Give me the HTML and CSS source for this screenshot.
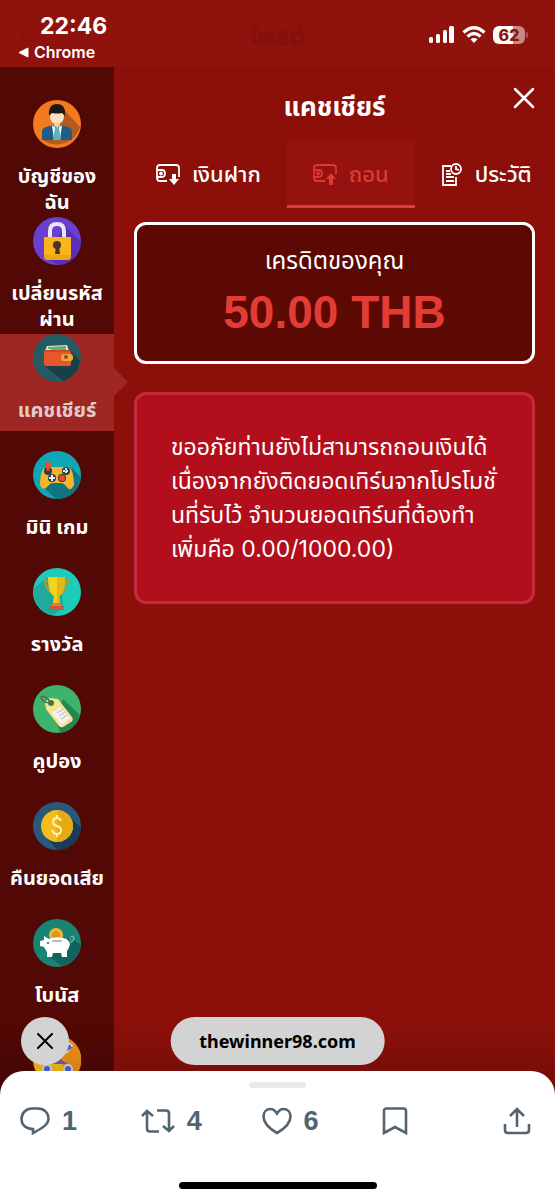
FILE: index.html
```
<!DOCTYPE html>
<html lang="th">
  <head>
    <meta charset="utf-8">
    <meta name="viewport" content="width=device-width, initial-scale=1">
    <title>แคชเชียร์</title>
    <link rel="stylesheet" href="styles.css">
  </head>
  <body>
    <header class="status-bar">
      <div class="status-left">
        <time class="clock">22:46</time>
        <a class="back-app" href="#">
          <svg width="11" height="11" viewBox="0 0 11 11"><path d="M1 5.500L10 1V10Z" fill="#fff" stroke="#fff" stroke-linejoin="round"/></svg>
          Chrome
        </a>
      </div>
      <svg class="ghost-arrow" width="20" height="20" viewBox="0 0 20 20" fill="none" stroke="currentColor" stroke-width="2"><path d="M19 10H2M9 3L2 10l7 7"/></svg>
      <span class="ghost-title">โพสต์</span>
      <div class="status-right">
        <svg width="26" height="18" viewBox="0 0 26 18" fill="#fff">
          <rect x="0" y="11" width="4" height="6" rx="1.500"/>
          <rect x="7" y="8" width="4" height="9" rx="1.500"/>
          <rect x="14" y="4" width="4" height="13" rx="1.500"/>
          <rect x="20" y="0" width="5" height="17" rx="1.500"/>
        </svg>
        <svg width="24" height="18" viewBox="0 0 24 18" fill="none" stroke="#fff" stroke-width="3.200">
          <path d="M1.500 6.500Q12-3 22.500 6.500M5.500 10.500Q12 4.500 18.500 10.500"/>
          <path d="M12 17l-3.500-3.700Q12 10.500 15.500 13.300Z" fill="#fff" stroke="none"/>
        </svg>
        <div class="battery"><span class="battery-level">62</span></div>
      </div>
    </header>

    <div class="browser">
      <nav class="sidebar">
        <a class="side-item" href="#">
          <svg class="side-icon" viewBox="0 0 48 48">
            <circle cx="24" cy="24" r="24" fill="#f47a20"/>
            <path d="M31 10L47 27A24 24 0 0 1 10 40L20 25Z" fill="#b55a1c"/>
            <path d="M9 40V32q0-4 4-5l7-2h8l7 2q4 1 4 5v8Z" fill="#1f5c86"/>
            <path d="M19 25l5 4 5-4-2 15h-6Z" fill="#fff"/>
            <path d="M22 28h4l2 12h-8Z" fill="#58b5bd"/>
            <path d="M21 20h6v6l-3 2-3-2Z" fill="#edc8a5"/>
            <path d="M17 10h14v7q-1 7-7 7t-7-7Z" fill="#fbdfc2"/>
            <path d="M16 16q-1-12 8-12t8 12l-3-3q-5 1-10 0Z" fill="#1d1716"/>
          </svg>
          <span class="side-label">บัญชีของ<br>ฉัน</span>
        </a>
        <a class="side-item" href="#">
          <svg class="side-icon" viewBox="0 0 48 48">
            <circle cx="24" cy="24" r="24" fill="#6b3fd0"/>
            <path d="M32 9L48 25A24 24 0 0 1 26 48L12 41Z" fill="#5630b8"/>
            <path d="M17 21v-7q0-7 7-7t7 7v7" fill="none" stroke="#e8e6f4" stroke-width="4"/>
            <path d="M11 20h27v19q0 4-4 4H15q-4 0-4-4Z" fill="#fbb51b"/>
            <path d="M11 38h27v1q0 4-4 4H15q-4 0-4-4Z" fill="#f0a315"/>
            <circle cx="24" cy="28" r="4" fill="#4a3523"/>
            <path d="M23 29h3l1 8h-5Z" fill="#4a3523"/>
          </svg>
          <span class="side-label">เปลี่ยนรหัส<br>ผ่าน</span>
        </a>
        <a class="side-item active" href="#" aria-current="page">
          <svg class="side-icon" viewBox="0 0 48 48">
            <circle cx="24" cy="24" r="24" fill="#245b63"/>
            <path d="M37 15L47 27A24 24 0 0 1 30 47L12 32Z" fill="#193f49"/>
            <path d="M12 17l2-5 20-1 2 6Z" fill="#d9eadb"/>
            <path d="M15 14l18-1M18 16l15-1" stroke="#64ac74" stroke-width="2"/>
            <rect x="11" y="16" width="27" height="16" rx="2" fill="#e9552c"/>
            <path d="M12 17h25" stroke="#b43e21" stroke-width="1"/>
            <rect x="28" y="20" width="12" height="7" rx="3" fill="#edaa36"/>
            <circle cx="33" cy="23" r="2" fill="#82522d"/>
          </svg>
          <span class="side-label">แคชเชียร์</span>
        </a>
        <a class="side-item" href="#">
          <svg class="side-icon" viewBox="0 0 48 48">
            <circle cx="24" cy="24" r="24" fill="#0fa6b5"/>
            <path d="M39 17L48 27A24 24 0 0 1 23 48L10 36Z" fill="#107582"/>
            <path d="M10 18q3-3 8-2h12q5-1 8 2 3 6 3 16-4 8-8 1-2-3-5-3h-8q-3 0-5 3-5 6-8-1 0-10 3-16Z" fill="#f6b52c"/>
            <circle cx="15" cy="20" r="4" fill="#263e51"/><path d="M15 20v-6" stroke="#ef4c21" stroke-width="3"/>
            <circle cx="15" cy="14" r="3" fill="#ef4c21"/>
            <circle cx="33" cy="20" r="4" fill="#263e51"/><path d="M33 17v6M30 20h6" stroke="#d9edf0" stroke-width="2" stroke-dasharray="2 1"/>
            <circle cx="19" cy="27" r="4" fill="#263e51"/><path d="M19 24v6M16 27h6" stroke="#eee" stroke-width="2"/>
            <circle cx="29" cy="27" r="4" fill="#263e51"/><circle cx="29" cy="27" r="3" fill="#ef4c21"/>
          </svg>
          <span class="side-label">มินิ เกม</span>
        </a>
        <a class="side-item" href="#">
          <svg class="side-icon" viewBox="0 0 48 48">
            <circle cx="24" cy="24" r="24" fill="#1ccbb8"/>
            <path d="M15 9L1 20A24 24 0 0 0 20 47L30 40 28 12Z" fill="#20aa9e"/>
            <path d="M17 13h-5q1 11 10 13M30 13h5q-1 11-10 13" fill="none" stroke="#b19b2a" stroke-width="2"/>
            <path d="M15 9h17q0 17-6 19l1 8h-7l1-8q-6-2-6-19Z" fill="#f3d31c"/>
            <path d="M24 9h8q0 17-6 19l1 8h-3Z" fill="#e5b816"/>
            <path d="M20 35h7l3 4H17Z" fill="#e77b34"/><rect x="16" y="38" width="15" height="4" fill="#c85a3c"/>
          </svg>
          <span class="side-label">รางวัล</span>
        </a>
        <a class="side-item" href="#">
          <svg class="side-icon" viewBox="0 0 48 48">
            <circle cx="24" cy="24" r="24" fill="#3db46c"/>
            <path d="M30 14L47 30A24 24 0 0 1 28 48L21 34Z" fill="#278550"/>
            <path d="M12 18l4-5 9 1 14 18q2 3-1 5l-8 5q-3 1-5-2L13 24Z" fill="#f7e390"/>
            <path d="M27 22l10 11-8 7-10-12Z" fill="#f3f2f2"/>
            <path d="M24 28l6-4M26 31l6-4M28 34l6-4" stroke="#b7b3c2" stroke-width="1"/>
            <circle cx="18" cy="18" r="3" fill="#2b8150"/>
            <path d="M18 18Q9 18 8 12q4-3 10 6" fill="none" stroke="#5d654d" stroke-width="1.500"/>
          </svg>
          <span class="side-label">คูปอง</span>
        </a>
        <a class="side-item" href="#">
          <svg class="side-icon" viewBox="0 0 48 48">
            <circle cx="24" cy="24" r="24" fill="#29587a"/>
            <path d="M35 13L48 26A24 24 0 0 1 24 48L13 35Z" fill="#193c58"/>
            <circle cx="24" cy="24" r="16" fill="#f5bd1c"/>
            <path d="M24 8a16 16 0 0 1 0 32Z" fill="#e7a914"/>
            <path d="M28 19q-1-3-4-3-4 0-4 4 0 3 4 4t4 4q0 4-4 4t-5-4M24 13v3M24 32v3" fill="none" stroke="#fff2bb" stroke-width="2"/>
          </svg>
          <span class="side-label">คืนยอดเสีย</span>
        </a>
        <a class="side-item" href="#">
          <svg class="side-icon" viewBox="0 0 48 48">
            <circle cx="24" cy="24" r="24" fill="#178476"/>
            <path d="M36 18L48 26A24 24 0 0 1 29 47L16 38Z" fill="#10645d"/>
            <circle cx="23" cy="16" r="7" fill="#f5b632"/><circle cx="23" cy="16" r="4" fill="#dc9023"/>
            <path d="M11 17l5 3q5-3 14-1 6 1 7 6-1 5-3 7v6h-5l-1-4h-8l-1 4h-5v-5l-3-5-4-1v-5l4-1Z" fill="#fff"/>
            <path d="M19 22h10" stroke="#82777b" stroke-width="1"/><circle cx="15" cy="24" r="1" fill="#4c4c58"/>
            <path d="M36 24q6-1 4-7-5 1-2 5 3 1 3-4" fill="none" stroke="#86bcb5" stroke-width="1"/>
          </svg>
          <span class="side-label">โบนัส</span>
        </a>
        <a class="side-item" href="#" aria-label="เมนู">
          <svg class="side-icon" viewBox="0 0 48 48">
            <circle cx="24" cy="24" r="24" fill="#ffc21c"/>
            <path d="M28 0A24 24 0 0 1 40 42L30 35Z" fill="#f59318"/>
            <path d="M32 16l6-8" stroke="#eef" stroke-width="5"/><path d="M32 14l6-4" stroke="#5365dc" stroke-width="4"/>
            <path d="M13 28l10-7 12 7Z" fill="#5966d7"/><path d="M17 24h12" stroke="#d54842" stroke-width="3"/>
            <circle cx="14" cy="33" r="5" fill="#d9dcff"/><circle cx="14" cy="33" r="3" fill="#5365dc"/>
            <circle cx="35" cy="33" r="5" fill="#d9dcff"/><circle cx="35" cy="33" r="3" fill="#5365dc"/>
          </svg>
        </a>
      </nav>

      <main class="cashier">
        <div class="cashier-head">
          <h1>แคชเชียร์</h1>
          <button class="close" aria-label="ปิด">
            <svg width="22" height="22" viewBox="0 0 22 22" stroke="#fff" stroke-width="2.500" stroke-linecap="round"><path d="M2 2l18 18M20 2L2 20"/></svg>
          </button>
        </div>

        <div class="tabs">
          <button class="tab">
            <svg width="24" height="22" viewBox="0 0 24 22" fill="none" stroke="currentColor" stroke-width="1.800">
              <path d="M11 17H4q-3 0-3-3V4q0-3 3-3h16q3 0 3 3v9M1 6h5q3 0 3 3.500T6 13H1"/><circle cx="5" cy="9.500" r="1"/>
              <path d="M16 10h4v5h3l-5 6-5-6h3Z" fill="currentColor" stroke="none"/>
            </svg>
            เงินฝาก
          </button>
          <button class="tab active">
            <svg width="24" height="22" viewBox="0 0 24 22" fill="none" stroke="currentColor" stroke-width="1.800">
              <path d="M12 17H4q-3 0-3-3V4q0-3 3-3h16q3 0 3 3v6M1 6h5q3 0 3 3.500T6 13H1"/><circle cx="5" cy="9.500" r="1"/>
              <path d="M18 9l5 6h-3v6h-4v-6h-3Z" fill="currentColor" stroke="none"/>
            </svg>
            ถอน
          </button>
          <button class="tab">
            <svg width="22" height="24" viewBox="0 0 22 24" fill="none" stroke="currentColor" stroke-width="1.800">
              <path d="M10 3H2v19h13v-8M15 19v3h-3M5 8h4M5 11h5M5 14h8M5 18h8"/>
              <circle cx="15" cy="6" r="5"/><path d="M15 3v3l3 1"/>
            </svg>
            ประวัติ
          </button>
        </div>

        <section class="credit">
          <p class="credit-label">เครดิตของคุณ</p>
          <p class="credit-amount">50.00 THB</p>
        </section>

        <section class="notice">
          <p>ขออภัยท่านยังไม่สามารถถอนเงินได้<br>เนื่องจากยังติดยอดเทิร์นจากโปรโมชั่<br>นที่รับไว้ จำนวนยอดเทิร์นที่ต้องทำ<br>เพิ่มคือ 0.00/1000.00)</p>
        </section>
      </main>

      <button class="dismiss" aria-label="ปิดหน้าเว็บ">
        <svg width="16" height="16" viewBox="0 0 16 16" stroke="#000" stroke-width="2" stroke-linecap="round"><path d="M1 1l14 14M15 1L1 15"/></svg>
      </button>
      <a class="site-pill" href="#">thewinner98.com</a>
    </div>

    <footer class="sheet">
      <div class="grabber"></div>
      <div class="actions">
        <button class="action" aria-label="ตอบกลับ 1">
          <svg width="30" height="28" viewBox="0 0 30 28" fill="none" stroke="currentColor" stroke-width="2.600"><path d="M13 22C6 22 1.500 18 1.500 12S6 1.500 12 1.500h6C24 1.500 28.500 6 28.500 11.500c0 6-6 9.500-15.500 14.500Z"/></svg>
          1
        </button>
        <button class="action" aria-label="รีโพสต์ 4">
          <svg width="34" height="26" viewBox="0 0 34 26" fill="none" stroke="currentColor" stroke-width="2.600"><path d="M18 23.500H9q-3 0-3-3V3M1 8l5-5 6 5M16 2.500h9q3 0 3 3V23M22 18l6 5 5-5"/></svg>
          4
        </button>
        <button class="action" aria-label="ถูกใจ 6">
          <svg width="30" height="28" viewBox="0 0 30 28" fill="none" stroke="currentColor" stroke-width="2.600"><path d="M15 26C8 22 1.500 16 1.500 9.500 1.500 5 4.500 2 8.500 2c3 0 5 2 6.500 4.500C16.500 4 18.500 2 21.500 2c4 0 7 3 7 7.500C28.500 16 22 22 15 26Z"/></svg>
          6
        </button>
        <button class="action" aria-label="บุ๊กมาร์ก">
          <svg width="26" height="28" viewBox="0 0 26 28" fill="none" stroke="currentColor" stroke-width="2.600"><path d="M2 26V4q0-2.500 2.500-2.500h17Q24 1.500 24 4v22l-11-6Z"/></svg>
        </button>
        <button class="action" aria-label="แชร์">
          <svg width="28" height="28" viewBox="0 0 28 28" fill="none" stroke="currentColor" stroke-width="2.600"><path d="M14 20V3M7 9l7-7 7 7M2 17v6q0 3 3 3h18q3 0 3-3v-6"/></svg>
        </button>
      </div>
      <div class="home-indicator"></div>
    </footer>
  </body>
</html>
```

FILE: styles.css
```
* {
  box-sizing: border-box;
}

body {
  display: flex;
  flex-direction: column;
  height: 100vh;
  margin: 0;
  background-color: #8c1009;
  color: #fff;
  font-family: Inter, "Noto Sans Thai", "Noto Sans", sans-serif;
}

h1, p {
  margin: 0;
}

a {
  color: inherit;
  text-decoration: none;
}

button {
  display: flex;
  align-items: center;
  justify-content: center;
  padding: 0;
  border: none;
  background: none;
  color: inherit;
  font: inherit;
  cursor: pointer;
}

svg {
  flex: none;
}

/* status bar */
.status-bar {
  position: relative;
  display: flex;
  justify-content: space-between;
  flex: none;
  padding: 12px 30px 2px 18px;
  background-color: #8f120d;
}

.clock {
  display: block;
  padding-left: 22px;
  font-size: 23px;
  font-weight: 700;
  line-height: 28px;
}

.back-app {
  display: flex;
  align-items: center;
  gap: 5px;
  font-size: 16px;
  font-weight: 600;
  line-height: 25px;
}

.status-right {
  display: flex;
  gap: 7px;
  height: 18px;
  margin-top: 14px;
}

.battery {
  position: relative;
  width: 32px;
  height: 18px;
  border-radius: 6px;
  background: linear-gradient(90deg, #fff 62%, #c98784 62%);
  color: #8f120d;
  font-size: 16px;
  font-weight: 800;
  line-height: 18px;
  text-align: center;
}

.battery::after {
  content: "";
  position: absolute;
  top: 6px;
  left: 33px;
  width: 2px;
  height: 6px;
  border-radius: 0 2px 2px 0;
  background-color: #b05552;
}

.ghost-arrow {
  position: absolute;
  top: 25px;
  left: 18px;
  color: #8a100b;
}

.ghost-title {
  position: absolute;
  top: 20px;
  left: 0;
  right: 0;
  color: #850f0a;
  font-size: 24px;
  font-weight: 700;
  text-align: center;
  pointer-events: none;
}

/* page inside the browser */
.browser {
  position: relative;
  display: grid;
  grid-template-columns: 114px minmax(0, 1fr);
  flex: 1;
  min-height: 0;
  overflow: hidden;
}

.browser::after {
  content: "";
  position: absolute;
  left: 0;
  right: 0;
  bottom: 0;
  height: 72px;
  background: linear-gradient(rgba(0, 0, 0, 0), rgba(0, 0, 0, 0.2));
  pointer-events: none;
}

.sidebar {
  display: flex;
  flex-direction: column;
  gap: 20px;
  min-height: 0;
  padding-top: 33px;
  background-color: #520804;
}

.side-item {
  position: relative;
  display: flex;
  flex-direction: column;
  align-items: center;
  gap: 15px;
  flex: none;
  height: 97px;
}

.side-icon {
  width: 48px;
  height: 48px;
}

.side-label {
  font-size: 20px;
  font-weight: 700;
  line-height: 26px;
  text-align: center;
  white-space: nowrap;
}

.side-item.active {
  background-color: #9e2724;
  color: #e0cccb;
}

.side-item.active::after {
  content: "";
  position: absolute;
  top: 34px;
  left: 100%;
  border: 14px solid transparent;
  border-left-color: #9e2724;
  border-right-width: 0;
}

.cashier {
  padding: 0 20px;
}

.cashier-head {
  display: flex;
  align-items: center;
  justify-content: center;
  position: relative;
  height: 72px;
  padding-top: 10px;
}

h1 {
  font-size: 26px;
  font-weight: 700;
}

.close {
  position: absolute;
  top: 20px;
  right: 0;
}

.tabs {
  display: flex;
}

.tab {
  flex: none;
  gap: 12px;
  height: 69px;
  padding: 6px 26px 0;
  border-bottom: 3px solid transparent;
  font-size: 22px;
  font-weight: 500;
  white-space: nowrap;
}

.tab:first-child {
  padding-left: 22px;
}

.tab.active {
  border-color: #e03c35;
  background-color: #95120f;
  color: #d93a33;
}

.credit {
  margin-top: 14px;
  padding: 20px 20px 14px;
  border: 3px solid #fff;
  border-radius: 12px;
  background-color: #5c0803;
  text-align: center;
}

.credit-label {
  font-size: 24px;
  line-height: 32px;
}

.credit-amount {
  color: #e23c35;
  font-family: "Liberation Sans", sans-serif;
  font-size: 46px;
  font-weight: 700;
  line-height: 70px;
}

.notice {
  margin-top: 28px;
  padding: 35px 34px;
  border: 3px solid #c52a3c;
  border-radius: 12px;
  background-color: #b30e1b;
  font-size: 23px;
  line-height: 34px;
  white-space: nowrap;
}

/* floating controls above the sheet */
.dismiss {
  position: absolute;
  left: 21px;
  bottom: 30px;
  z-index: 1;
  width: 48px;
  height: 48px;
  border-radius: 50%;
  background-color: #d3d3d3;
}

.site-pill {
  position: absolute;
  left: 50%;
  bottom: 30px;
  z-index: 1;
  padding: 0 29px;
  border-radius: 24px;
  background-color: #d3d3d3;
  color: #000;
  font-family: "Noto Sans", sans-serif;
  font-size: 18px;
  font-weight: 700;
  line-height: 48px;
  transform: translateX(-50%);
}

/* bottom sheet */
.sheet {
  position: relative;
  z-index: 2;
  flex: none;
  margin-top: -24px;
  padding: 11px 0;
  border-radius: 24px 24px 0 0;
  background-color: #fff;
  color: #536471;
}

.grabber {
  width: 57px;
  height: 6px;
  margin: 0 auto;
  border-radius: 3px;
  background-color: #e6eaed;
}

.actions {
  display: grid;
  grid-template-columns: repeat(4, 1fr) auto;
  margin: 16px 0 44px;
  padding: 0 24px 0 20px;
}

.action {
  justify-content: flex-start;
  gap: 12px;
  height: 34px;
  font-family: "Liberation Sans", sans-serif;
  font-size: 27px;
  font-weight: 700;
}

.home-indicator {
  width: 198px;
  height: 7px;
  margin: 0 auto;
  border-radius: 4px;
  background-color: #000;
}
```
